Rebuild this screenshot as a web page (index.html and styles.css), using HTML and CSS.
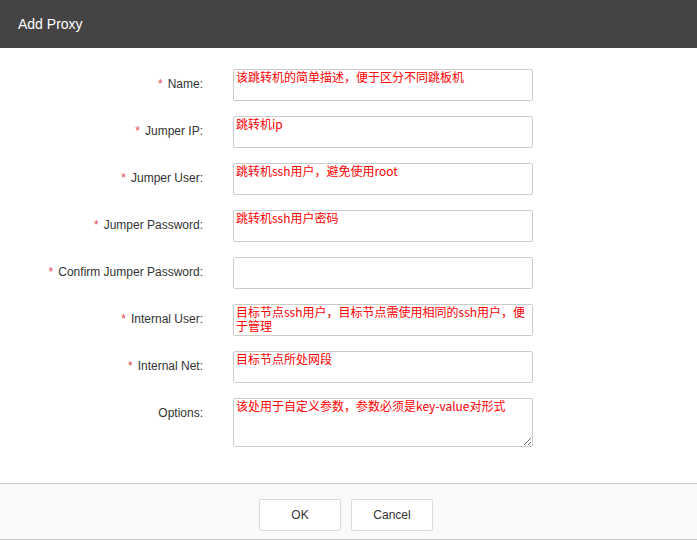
FILE: index.html
```html
<!DOCTYPE html>
<html>
<head>
<meta charset="utf-8">
<link rel="stylesheet" href="styles.css">
</head>
<body>
<div class="dialog">
  <div class="dialog-header">Add Proxy</div>
  <div class="dialog-body">
    <form class="form">
      <label class="label"><span class="req">*</span>Name:</label>
      <textarea class="field" placeholder="该跳转机的简单描述，便于区分不同跳板机"></textarea>

      <label class="label"><span class="req">*</span>Jumper IP:</label>
      <textarea class="field" placeholder="跳转机ip"></textarea>

      <label class="label"><span class="req">*</span>Jumper User:</label>
      <textarea class="field" placeholder="跳转机ssh用户，避免使用root"></textarea>

      <label class="label"><span class="req">*</span>Jumper Password:</label>
      <textarea class="field" placeholder="跳转机ssh用户密码"></textarea>

      <label class="label"><span class="req">*</span>Confirm Jumper Password:</label>
      <textarea class="field"></textarea>

      <label class="label"><span class="req">*</span>Internal User:</label>
      <textarea class="field" placeholder="目标节点ssh用户，目标节点需使用相同的ssh用户，便于管理"></textarea>

      <label class="label"><span class="req">*</span>Internal Net:</label>
      <textarea class="field" placeholder="目标节点所处网段"></textarea>

      <label class="label">Options:</label>
      <textarea class="field field-options" placeholder="该处用于自定义参数，参数必须是key-value对形式"></textarea>
    </form>
  </div>
  <div class="dialog-footer">
    <button class="btn" type="button">OK</button>
    <button class="btn" type="button">Cancel</button>
  </div>
</div>
</body>
</html>
```

FILE: styles.css
```css
html, body {
  margin: 0;
  padding: 0;
  background: #fff;
}

body {
  font-family: "Liberation Sans", Arial, sans-serif;
  font-size: 12px;
  color: #333;
}

.dialog {
  display: flex;
  flex-direction: column;
  height: 540px;
}

.dialog-header {
  height: 48px;
  background: #444;
  color: #fff;
  font-size: 14px;
  line-height: 48px;
  padding-left: 18px;
}

.dialog-body {
  padding: 21px 0 36px 0;
  flex: 1;
}

.form {
  display: grid;
  grid-template-columns: 203px 300px;
  column-gap: 30px;
  row-gap: 15px;
  margin: 0;
}

.label {
  justify-self: end;
  align-self: start;
  padding-top: 8px;
  font-size: 12px;
  line-height: 14px;
  color: #333;
  white-space: nowrap;
}

.req {
  color: #e5484d;
  margin-right: 5px;
}

.field {
  box-sizing: border-box;
  width: 300px;
  height: 32px;
  margin: 0;
  padding: 0 2px;
  border: 1px solid #ccc;
  border-radius: 2px;
  background: #fff;
  font-family: "Noto Sans CJK SC", "Liberation Sans", sans-serif;
  font-size: 12px;
  line-height: 13.5px;
  color: #333;
  resize: none;
  overflow: hidden;
  outline: none;
  display: block;
}

.field::placeholder {
  color: #ff0000;
  opacity: 1;
}

.field-options {
  height: 49px;
  resize: both;
}

.dialog-footer {
  border-top: 1px solid #ccc;
  border-bottom: 1px solid #c8c8c8;
  background: #f9f9f9;
  padding: 15px 5px 8px 0;
  display: flex;
  justify-content: center;
  gap: 10px;
}

.btn {
  box-sizing: border-box;
  width: 82px;
  height: 32px;
  border: 1px solid #ddd;
  border-radius: 2px;
  background: #fff;
  font-family: "Liberation Sans", Arial, sans-serif;
  font-size: 12px;
  color: #333;
  padding: 0;
}
```
